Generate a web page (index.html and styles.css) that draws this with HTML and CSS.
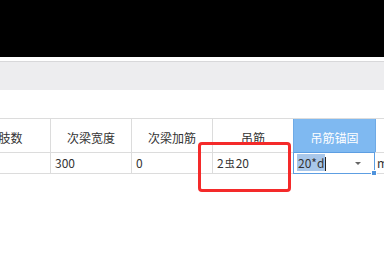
FILE: index.html
```html
<!DOCTYPE html>
<html lang="zh-CN">
<head>
    <meta charset="UTF-8">
    <title>吊筋</title>
    <link rel="stylesheet" href="styles.css">
</head>
<body>
    <div class="topbar"></div>
    <div class="toolbar"></div>
    <div class="spacer"></div>

    <div class="grid">
        <div class="row head">
            <div class="cell first">箍筋肢数</div>
            <div class="cell">次梁宽度</div>
            <div class="cell">次梁加筋</div>
            <div class="cell">吊筋</div>
            <div class="cell active">吊筋锚固</div>
            <div class="cell last"></div>
        </div>
        <div class="row">
            <div class="cell first"></div>
            <div class="cell">300</div>
            <div class="cell">0</div>
            <div class="cell">2<span class="bar">虫</span>20</div>
            <div class="cell editor">
                <span class="sel">20*d</span><span class="caret"></span>
                <span class="arrow"></span>
                <span class="handle"></span>
            </div>
            <div class="cell last">mm</div>
        </div>
    </div>

    <!-- annotation -->
    <div class="mark"></div>
</body>
</html>
```

FILE: styles.css
```css
body {
    margin: 0;
    font-family: "Noto Sans CJK SC", "Liberation Sans", sans-serif;
    font-size: 12px;
    color: #333;
    background: #fff;
    overflow: hidden;
    position: relative;
    height: 264px;
}

.topbar {
    height: 57px;
    background: #000;
}

.toolbar {
    margin-top: 4px;
    height: 28px;
    background: #ededef;
    border-top: 1px solid #d8d8da;
}

.spacer {
    height: 28px;
}

.grid {
    margin-left: -53px;
    border-top: 1px solid #dcdcdc;
    width: 500px;
}

.row {
    display: flex;
    height: 20px;
    border-bottom: 1px solid #dcdcdc;
}
.row.head {
    height: 33px;
}

.cell {
    flex: none;
    border-right: 1px solid #dcdcdc;
    line-height: 20px;
    padding-left: 4px;
    width: 76px;
    white-space: nowrap;
    position: relative;
}
.cell.first {
    width: 99px;
}
.head .cell {
    text-align: center;
    padding-left: 0;
    width: 80px;
    line-height: 33px;
    padding-top: 2px;
    height: 31px;
}
.head .cell.first {
    width: 103px;
}
.cell.last {
    border-right: none;
    padding-left: 2px;
}

.head .cell.active {
    background: #7fb9f1;
    color: #fff;
    margin-left: -1px;
    border-left: 1px solid #6eaae6;
    border-right: 1px solid #6eaae6;
    width: 81px;
}

.bar {
    font-size: 10px;
    margin: 0 1px;
    vertical-align: 1px;
}

.editor {
    margin-left: -1px;
    margin-top: -1px;
    height: 20px;
    width: 77px;
    border: 1px solid #5d9ee2;
    padding-left: 3px;
    background: #fff;
}
.sel {
    background: #a9c7ea;
    color: #333;
    padding: 0 1px;
}
.caret {
    display: inline-block;
    width: 1px;
    height: 14px;
    background: #222;
    vertical-align: -3px;
}
.arrow {
    position: absolute;
    right: 13px;
    top: 9px;
    border-left: 3px solid transparent;
    border-right: 3px solid transparent;
    border-top: 3px solid #666;
}
.handle {
    position: absolute;
    right: -3px;
    bottom: -3px;
    width: 4px;
    height: 4px;
    background: #4f93dc;
    border: 1px solid #fff;
}

.mark {
    position: absolute;
    left: 198px;
    top: 142px;
    width: 93px;
    height: 50px;
    box-sizing: border-box;
    border: 3px solid #f42a2a;
    border-radius: 4px;
}
```
